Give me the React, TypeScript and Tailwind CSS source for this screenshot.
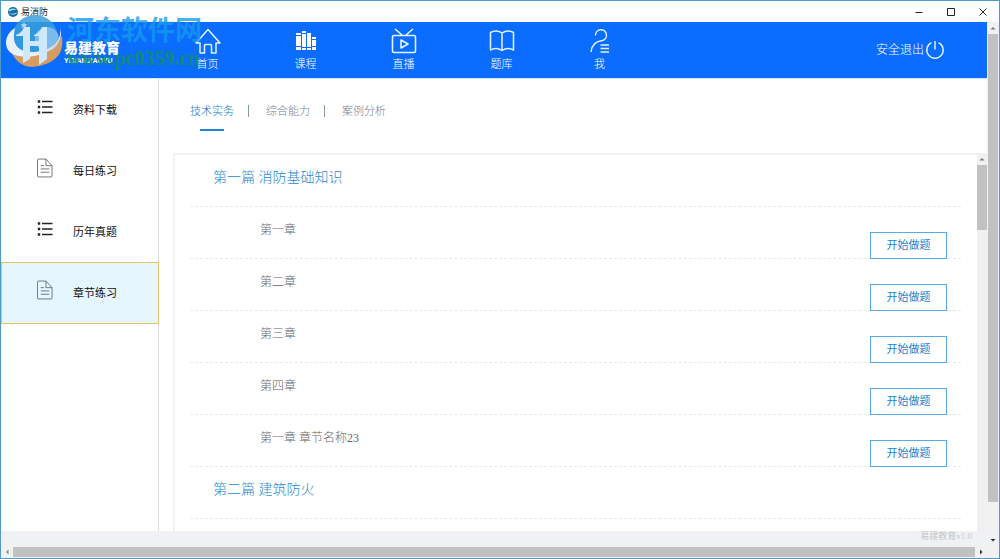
import type { ReactNode } from "react";

const Chevron = ({ d, tone }: { d: string; tone: string }) => (
  <svg viewBox="0 0 12 12" className="size-3 shrink-0" aria-hidden="true">
    <path d={d} fill={tone} />
  </svg>
);
const UP = "M3.500 7.500 6 5l2.500 2.500z";
const DOWN = "M3.500 5 6 7.500 8.500 5z";
const LEFT = "M7.500 3.500 5 6l2.500 2.500z";
const RIGHT = "M5 3.500 7.500 6 5 8.500z";

const ListIcon = () => (
  <svg viewBox="0 0 16 16" className="size-4" fill="none" stroke="#222" aria-hidden="true">
    <path d="M5 2.500H15.500M5 8H15.500M5 13.500H15.500" strokeWidth="1.400" />
    <path d="M.8 2.500h2.400M.8 8h2.400M.8 13.500h2.400" strokeWidth="2.400" />
  </svg>
);

const FileIcon = () => (
  <svg viewBox="0 0 17 20" className="h-5 w-4" fill="none" stroke="#6b737a" strokeWidth="1" aria-hidden="true">
    <path d="M1.500.5H9.500L16 7.500v11q0 1-1 1h-13.500q-1 0-1-1v-17q0-1 1-1zM9.500.5V7.500h6.500M4 7.500h3.500M4 11h9M4 14.500h9" />
  </svg>
);

const navItems: { label: string; icon: ReactNode }[] = [
  { label: "首页", icon: <path d="M1 15 13 1.500 25 15H21V25H16.500V17.500q0-1-1-1h-5q-1 0-1 1V25H5V15z" strokeWidth="1.500" /> },
  {
    label: "课程",
    icon: (
      <g fill="#fff" stroke="none">
        <path d="M3 5h5v2H3zM3 8h5v10H3zM3 19h5v3H3zM9 3h4v2H9zM9 6h4v13H9zM9 20h4v2H9zM14 5h4v14h-4zM14 20h4v2h-4zM19 9h4v2h-4zM19 12h4v6h-4zM19 19h4v3h-4z" />
      </g>
    ),
  },
  { label: "直播", icon: <path d="M3 7.500h20q1.500 0 1.500 1.500v14q0 1.500-1.500 1.500H3q-1.500 0-1.500-1.500V9q0-1.500 1.500-1.500zM11 7 4 1M15 7l7-6M10 12v8l7-4z" strokeWidth="1.600" /> },
  { label: "题库", icon: <path d="M13 5Q10 3 7 3T1.500 4.500V22Q4 20.500 7 20.500T13 22.500Q16 20.500 19 20.500t5.500 1.500V4.500Q22 3 19 3t-6 2zV22.500" strokeWidth="1.500" /> },
  { label: "我", icon: <path d="M8.500 7.500A5.500 5.500 0 1 1 15.500 12.500Q5 13.500 4 24M13.500 17H22M13.500 20.500H22M13.500 24H22" strokeWidth="1.500" /> },
];

const sideItems = [
  { label: "资料下载", icon: <ListIcon /> },
  { label: "每日练习", icon: <FileIcon /> },
  { label: "历年真题", icon: <ListIcon /> },
  { label: "章节练习", icon: <FileIcon />, active: true },
];

const sections = [
  { title: "第一篇 消防基础知识", chapters: ["第一章", "第二章", "第三章", "第四章", "第一章 章节名称23"] },
  { title: "第二篇 建筑防火", chapters: [] },
];

function TitleBar() {
  return (
    <div className="flex h-[21px] shrink-0 items-center bg-white pl-1.5">
      <svg viewBox="0 0 12 12" className="size-3" aria-hidden="true">
        <ellipse cx="6" cy="6" rx="5" ry="5" fill="#176ba8" />
        <path d="M1.500 4Q6 1 10.500 4Q6 3 2.500 5.500zM1 7q5 2 10-1-4 5-10 1z" fill="#a9d9ef" />
      </svg>
      <span className="ml-0.5 text-[9px] leading-3 text-[#222]">易消防</span>
      <div className="ml-auto flex gap-5 pr-2.5 text-[#222]">
        <button aria-label="最小化" className="size-3">
          <svg viewBox="0 0 12 12" stroke="currentColor"><path d="M2.500 6.500h7" /></svg>
        </button>
        <button aria-label="最大化" className="size-3">
          <svg viewBox="0 0 12 12" fill="none" stroke="currentColor"><path d="M2.500 2.500h7v7h-7z" /></svg>
        </button>
        <button aria-label="关闭" className="size-3">
          <svg viewBox="0 0 12 12" stroke="currentColor"><path d="m2.500 2.500 7 7m0-7-7 7" /></svg>
        </button>
      </div>
    </div>
  );
}

function Header() {
  return (
    <header className="flex h-14 shrink-0 items-center bg-[#0b6dff] pr-[42px] text-white">
      <div className="flex w-[157px] flex-col items-start pt-1.5 pl-[63px] font-bold">
        <span className="text-[14px] leading-4 font-black">易建教育</span>
        <span className="font-['Liberation_Sans',sans-serif] text-[7px] leading-[8px]">YIJIANJIAOYU</span>
      </div>
      <nav className="flex">
        {navItems.map((n) => (
          <a key={n.label} href="#" className="flex w-[98px] flex-col items-center gap-0.5 pb-px">
            <svg viewBox="0 0 26 26" className="ml-px size-[26px]" fill="none" stroke="#e2f4ff" strokeLinejoin="round" aria-hidden="true">
              {n.icon}
            </svg>
            <span className="ml-px text-[11px] leading-4 font-light">{n.label}</span>
          </a>
        ))}
      </nav>
      <button className="ml-auto flex items-center gap-px text-[12px] font-light">
        安全退出
        <svg viewBox="0 0 20 20" className="size-5" fill="none" stroke="#d8f0ff" strokeWidth="1.500" aria-hidden="true">
          <path d="M6.500 2.600A8.200 8.200 0 1 0 13.500 2.600M10 1v8.500" />
        </svg>
      </button>
    </header>
  );
}

function Watermark() {
  return (
    <div className="pointer-events-none absolute top-3 left-1 flex" aria-hidden="true">
      <svg viewBox="0 0 60 56" className="h-14 w-[60px]">
        <circle cx="30" cy="25" r="23" fill="#3a9fdc" opacity=".85" />
        <path d="M6 38Q28 47 50 31L57 23Q59 38 51 45 42 53 27 54 12 53 6 38z" fill="#d69c62" />
        <path d="M10 15C-2 22-2 38 10 42 28 48 56 38 56 20L55 14Q58 36 30 39 4 40 10 15z" fill="#e6f1fb" />
        <circle cx="42" cy="26" r="12" fill="#b9daf4" opacity=".55" />
        <path d="M11 22Q17 20 19 14H25V46L18 50V23H11z" fill="#cfe8fb" />
        <path d="M29 22Q35 20 37 14H42V46L34 52V23H29z" fill="#cfe8fb" />
        <path d="M18 28H42V33H18z" fill="#cfe8fb" />
        <path d="m19 9 1 2 2.300.2-1.700 1.600.5 2.300-2.100-1.200-2.100 1.200.5-2.300-1.700-1.600L18 11z" fill="#a5dcff" />
      </svg>
      <div className="flex flex-col pt-0.5 pl-0.5 font-bold">
        <span className="text-[27px] leading-8 text-[#1499ef]/80">河东软件网</span>
        <span className="font-['Liberation_Serif',serif] text-[20px] leading-[22px] text-[#129060]/85">www.pc0359.cn</span>
      </div>
    </div>
  );
}

function Sidebar() {
  return (
    <aside className="w-[158px] shrink-0 border-r border-[#dcdcdc] bg-white">
      {sideItems.map((s) => (
        <a
          key={s.label}
          href="#"
          className={
            s.active
              ? "-mr-px flex h-[62px] items-center gap-5 border border-[#e0c36a] bg-[#e6f6fe] pl-[35px]"
              : "flex h-[61px] items-center gap-5 pl-9"
          }
        >
          <span className="-mt-1.5">{s.icon}</span>
          <span className="text-[11px] leading-4 text-[#111]">{s.label}</span>
        </a>
      ))}
    </aside>
  );
}

function Tabs() {
  return (
    <div role="tablist" className="flex h-[74px] shrink-0 items-start pt-6 pl-[31px] text-[11px] leading-4 font-light text-[#728096]">
      <button role="tab" aria-selected="true" className="flex flex-col items-center gap-2.5 text-[#117cd0]">
        技术实务
        <span className="h-0.5 w-6 bg-[#2583cf]" />
      </button>
      <span className="mr-[17px] ml-3.5 mt-0.5 h-3 w-px bg-[#8996a6]" />
      <button role="tab" aria-selected="false">综合能力</button>
      <span className="mr-[17px] ml-3.5 mt-0.5 h-3 w-px bg-[#8996a6]" />
      <button role="tab" aria-selected="false">案例分析</button>
    </div>
  );
}

function Chapters() {
  return (
    <div className="ml-[14px] flex min-h-0 flex-1">
      <div className="min-w-0 flex-1 overflow-hidden border-t-2 border-l-2 border-[#f3f3f3] pr-4 pl-[15px]">
        {sections.map((s) => (
          <section key={s.title}>
            <h2 className="flex h-[52px] items-center border-b border-dashed border-[#e9e9e9] pb-1.5 pl-[23px] text-[14px] font-light text-[#2488d8]">
              {s.title}
            </h2>
            {s.chapters.map((c) => (
              <div key={c} className="flex h-[52px] items-end justify-between border-b border-dashed border-[#e9e9e9] pr-3.5 pl-[70px]">
                <span className="pb-5 text-[12px] leading-4 font-light text-[#666]">{c}</span>
                <button className="-mb-px h-[27px] w-[77px] border border-[#5aa9e6] bg-white text-[11px] text-[#1f7fd0]">
                  开始做题
                </button>
              </div>
            ))}
          </section>
        ))}
      </div>
      <div className="flex w-2.5 flex-col items-center bg-[#f0f0f0]">
        <Chevron d={UP} tone="#777" />
        <div className="h-[65px] w-full bg-[#c1c1c1]" />
      </div>
    </div>
  );
}

export default function App() {
  return (
    <div className="relative flex h-screen flex-col border border-[#4e9ac8] bg-[#eff1f4] font-['Liberation_Serif','Noto_Sans_CJK_SC',sans-serif]">
      <TitleBar />
      <div className="flex min-h-0 flex-1">
        <div className="flex min-w-0 flex-1 flex-col">
          <Header />
          <div className="flex min-h-0 flex-1 border-t border-[#d5e6fb] bg-white">
            <Sidebar />
            <main className="flex min-w-0 flex-1 flex-col">
              <Tabs />
              <Chapters />
            </main>
          </div>
          <footer className="h-[15px] shrink-0 pr-[15px] text-right text-[9px] leading-[10px] text-[#c4c6c9]">易建教育v1.0</footer>
        </div>
        <div className="flex w-3 shrink-0 flex-col bg-[#f1f1f1]">
          <Chevron d={UP} tone="#777" />
          <div className="mx-px flex-1 bg-[#c1c1c1]" />
          <div className="h-8" />
          <Chevron d={DOWN} tone="#333" />
        </div>
      </div>
      <div className="flex h-3 shrink-0 items-center bg-[#f1f1f1] pr-3">
        <Chevron d={LEFT} tone="#888" />
        <div className="h-2.5 flex-1 bg-[#c1c1c1]" />
        <Chevron d={RIGHT} tone="#333" />
      </div>
      <Watermark />
    </div>
  );
}
